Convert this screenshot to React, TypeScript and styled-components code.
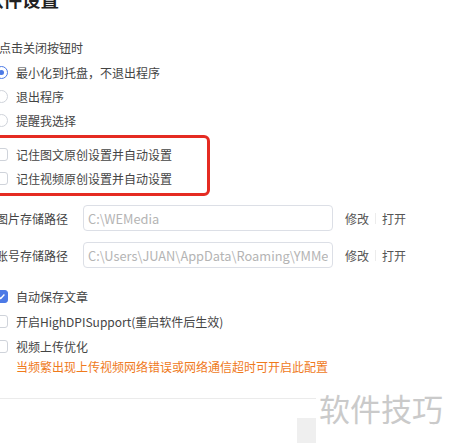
import React from "react";
import styled, { createGlobalStyle } from "styled-components";

const GlobalStyle = createGlobalStyle`
  html, body {
    margin: 0;
    padding: 0;
    background: #fff;
  }
  body {
    font-family: "Noto Sans CJK SC", "Noto Sans", sans-serif;
    color: #444;
  }
`;

const Page = styled.div`
  position: relative;
  width: 451px;
  height: 443px;
  overflow: hidden;
  background: #fff;
`;

const Content = styled.div`
  margin-left: -15px;
  display: flex;
  flex-direction: column;
`;

const Title = styled.h2`
  margin: -13px 0 0;
  font-size: 18.5px;
  line-height: 24px;
  font-weight: 700;
  color: #222;
`;

const GroupLabel = styled.div`
  margin-top: 25px;
  padding-left: 14px;
  font-size: 12px;
  line-height: 24px;
`;

const OptionList = styled.div`
  display: flex;
  flex-direction: column;
`;

const Option = styled.label<{ $h?: number }>`
  display: flex;
  align-items: center;
  gap: 8px;
  height: ${(p) => p.$h ?? 24}px;
  padding-left: 10px;
  font-size: 12px;
`;

const Radio = styled.span<{ $on?: boolean }>`
  box-sizing: border-box;
  width: 13px;
  height: 13px;
  border-radius: 50%;
  border: 1px solid ${(p) => (p.$on ? "#4c7ae6" : "#cfd3da")};
  display: flex;
  align-items: center;
  justify-content: center;
  &::after {
    content: "";
    width: 5px;
    height: 5px;
    border-radius: 50%;
    background: ${(p) => (p.$on ? "#4c7ae6" : "transparent")};
  }
`;

const Box = styled.span<{ $on?: boolean }>`
  box-sizing: border-box;
  width: 13px;
  height: 13px;
  border-radius: 3px;
  border: 1px solid ${(p) => (p.$on ? "#4c7ae6" : "#cfd3da")};
  background: ${(p) => (p.$on ? "#4c7ae6" : "#fff")};
  display: flex;
  align-items: center;
  justify-content: center;
`;

const Highlight = styled.div`
  box-sizing: border-box;
  margin: 3px 0 0 5px;
  width: 220px;
  border: 3px solid #e52b22;
  border-radius: 6px;
  padding: 4px 0 3px 2px;
  display: flex;
  flex-direction: column;
`;

const HighlightOption = styled(Option)`
  padding-left: 0;
`;

const PathList = styled.div`
  margin-top: 9px;
  display: flex;
  flex-direction: column;
  gap: 11px;
`;

const PathRow = styled.div`
  display: flex;
  align-items: center;
  height: 26px;
`;

const PathLabel = styled.span`
  margin-left: 11px;
  width: 87px;
  font-size: 12px;
`;

const PathInput = styled.input`
  box-sizing: border-box;
  width: 250px;
  height: 26px;
  border: 1px solid #dcdfe6;
  border-radius: 4px;
  padding: 0 4px;
  font-family: "Noto Sans CJK SC", "Noto Sans", sans-serif;
  font-size: 12.8px;
  color: #b4b4b4;
  background: #fff;
  outline: none;
`;

const Actions = styled.div`
  margin-left: 12px;
  display: flex;
  align-items: center;
  font-size: 12px;
  color: #555;
`;

const Sep = styled.span`
  width: 1px;
  height: 11px;
  margin: 0 6px;
  background: #ececec;
`;

const CheckList = styled.div`
  margin-top: 16px;
  display: flex;
  flex-direction: column;
`;

const Hint = styled.div`
  padding-left: 31px;
  font-size: 12px;
  line-height: 16px;
  color: #ef7a1c;
`;

const Rule = styled.div`
  margin-top: 23px;
  height: 1px;
  background: #ebebeb;
`;

const Watermark = styled.div`
  position: absolute;
  left: 316px;
  top: 389px;
  width: 140px;
  height: 60px;
  padding-left: 3px;
  background: #fff;
  font-family: "Noto Sans CJK SC", sans-serif;
  font-size: 31px;
  line-height: 38px;
  color: #cacaca;
`;

const Tab = styled.div`
  position: absolute;
  left: 297px;
  top: 418px;
  width: 19px;
  height: 25px;
  background: #efefef;
`;

const Tick = () => (
  <svg width="9" height="9" viewBox="0 0 10 10">
    <path d="M2 5.2 L4.2 7.3 L8.2 2.8" fill="none" stroke="#fff" strokeWidth="1.5" />
  </svg>
);

const paths = [
  { label: "图片存储路径", value: "C:\\WEMedia" },
  { label: "账号存储路径", value: "C:\\Users\\JUAN\\AppData\\Roaming\\YMMedia" },
];

export default function App() {
  return (
    <Page>
      <GlobalStyle />
      <Content>
        <Title>软件设置</Title>
        <GroupLabel>点击关闭按钮时</GroupLabel>
        <OptionList>
          <Option>
            <Radio $on />
            最小化到托盘，不退出程序
          </Option>
          <Option>
            <Radio />
            退出程序
          </Option>
          <Option>
            <Radio />
            提醒我选择
          </Option>
        </OptionList>
        <Highlight>
          <HighlightOption>
            <Box />
            记住图文原创设置并自动设置
          </HighlightOption>
          <HighlightOption>
            <Box />
            记住视频原创设置并自动设置
          </HighlightOption>
        </Highlight>
        <PathList>
          {paths.map((p) => (
            <PathRow key={p.label}>
              <PathLabel>{p.label}</PathLabel>
              <PathInput readOnly value={p.value} />
              <Actions>
                修改
                <Sep />
                打开
              </Actions>
            </PathRow>
          ))}
        </PathList>
        <CheckList>
          <Option $h={25}>
            <Box $on>
              <Tick />
            </Box>
            自动保存文章
          </Option>
          <Option $h={25}>
            <Box />
            开启HighDPISupport(重启软件后生效)
          </Option>
          <Option $h={25}>
            <Box />
            视频上传优化
          </Option>
        </CheckList>
        <Hint>当频繁出现上传视频网络错误或网络通信超时可开启此配置</Hint>
        <Rule />
      </Content>
      <Tab />
      <Watermark>软件技巧</Watermark>
    </Page>
  );
}
